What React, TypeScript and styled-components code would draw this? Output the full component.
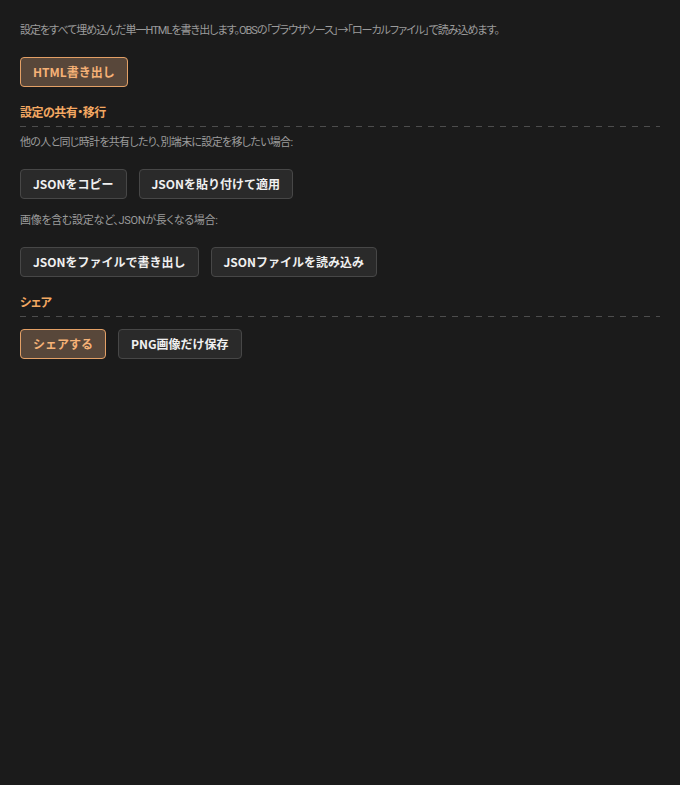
import styled, { createGlobalStyle } from "styled-components"

const GlobalStyle = createGlobalStyle`
  html, body {
    margin: 0;
    padding: 0;
    background: #1b1b1b;
  }
  body {
    font-family: Roboto, "Noto Sans CJK JP", sans-serif;
    font-feature-settings: "palt";
    color: #e6e6e6;
  }
`

const Page = styled.div`
  padding: 23px 20px 20px;
  min-height: 785px;
  box-sizing: border-box;
`

const Note = styled.p<{ $mb?: number; $ls?: number }>`
  margin: 0 0 ${p => p.$mb ?? 18}px;
  font-size: 11px;
  line-height: 16px;
  letter-spacing: ${p => p.$ls ?? 0}px;
  color: #9c9c9c;
`

// dashed rule drawn as a gradient: 6px dash / 6px gap
const SectionTitle = styled.h3<{ $mb?: number }>`
  margin: 0 0 ${p => p.$mb ?? 8}px;
  padding-bottom: 6px;
  font-size: 12px;
  line-height: 16px;
  font-weight: 700;
  letter-spacing: -0.5px;
  color: #f3a862;
  background: repeating-linear-gradient(to right, #4d4d4d 0 6px, transparent 6px 12px) left bottom / 100% 1px no-repeat;
`

const Row = styled.div<{ $mb?: number }>`
  display: flex;
  gap: 12px;
  margin-bottom: ${p => p.$mb ?? 18}px;
`

const Btn = styled.button<{ $primary?: boolean }>`
  font-family: "Noto Sans CJK JP", sans-serif;
  font-feature-settings: normal;
  font-size: 12px;
  line-height: 16px;
  font-weight: 700;
  padding: 6px 12px;
  border-radius: 4px;
  cursor: pointer;
  border: 1px solid ${p => (p.$primary ? "#e3a066" : "#474747")};
  background: ${p => (p.$primary ? "#58473a" : "#2a2a2a")};
  color: ${p => (p.$primary ? "#f6b277" : "#f0f0f0")};
`

const App = () => {
  return (
    <>
      <GlobalStyle />
      <Page>
        <Note $ls={-1}>設定をすべて埋め込んだ単一HTMLを書き出します。OBSの「ブラウザソース」→「ローカルファイル」で読み込めます。</Note>
        <Row>
          <Btn $primary>HTML書き出し</Btn>
        </Row>

        <SectionTitle>設定の共有・移行</SectionTitle>
        <Note $ls={-0.7}>他の人と同じ時計を共有したり、別端末に設定を移したい場合:</Note>
        <Row $mb={14}>
          <Btn>JSONをコピー</Btn>
          <Btn>JSONを貼り付けて適用</Btn>
        </Row>
        <Note $ls={-0.3}>画像を含む設定など、JSONが長くなる場合:</Note>
        <Row>
          <Btn>JSONをファイルで書き出し</Btn>
          <Btn>JSONファイルを読み込み</Btn>
        </Row>

        <SectionTitle $mb={12}>シェア</SectionTitle>
        <Row>
          <Btn $primary>シェアする</Btn>
          <Btn>PNG画像だけ保存</Btn>
        </Row>
      </Page>
    </>
  )
}

export default App
